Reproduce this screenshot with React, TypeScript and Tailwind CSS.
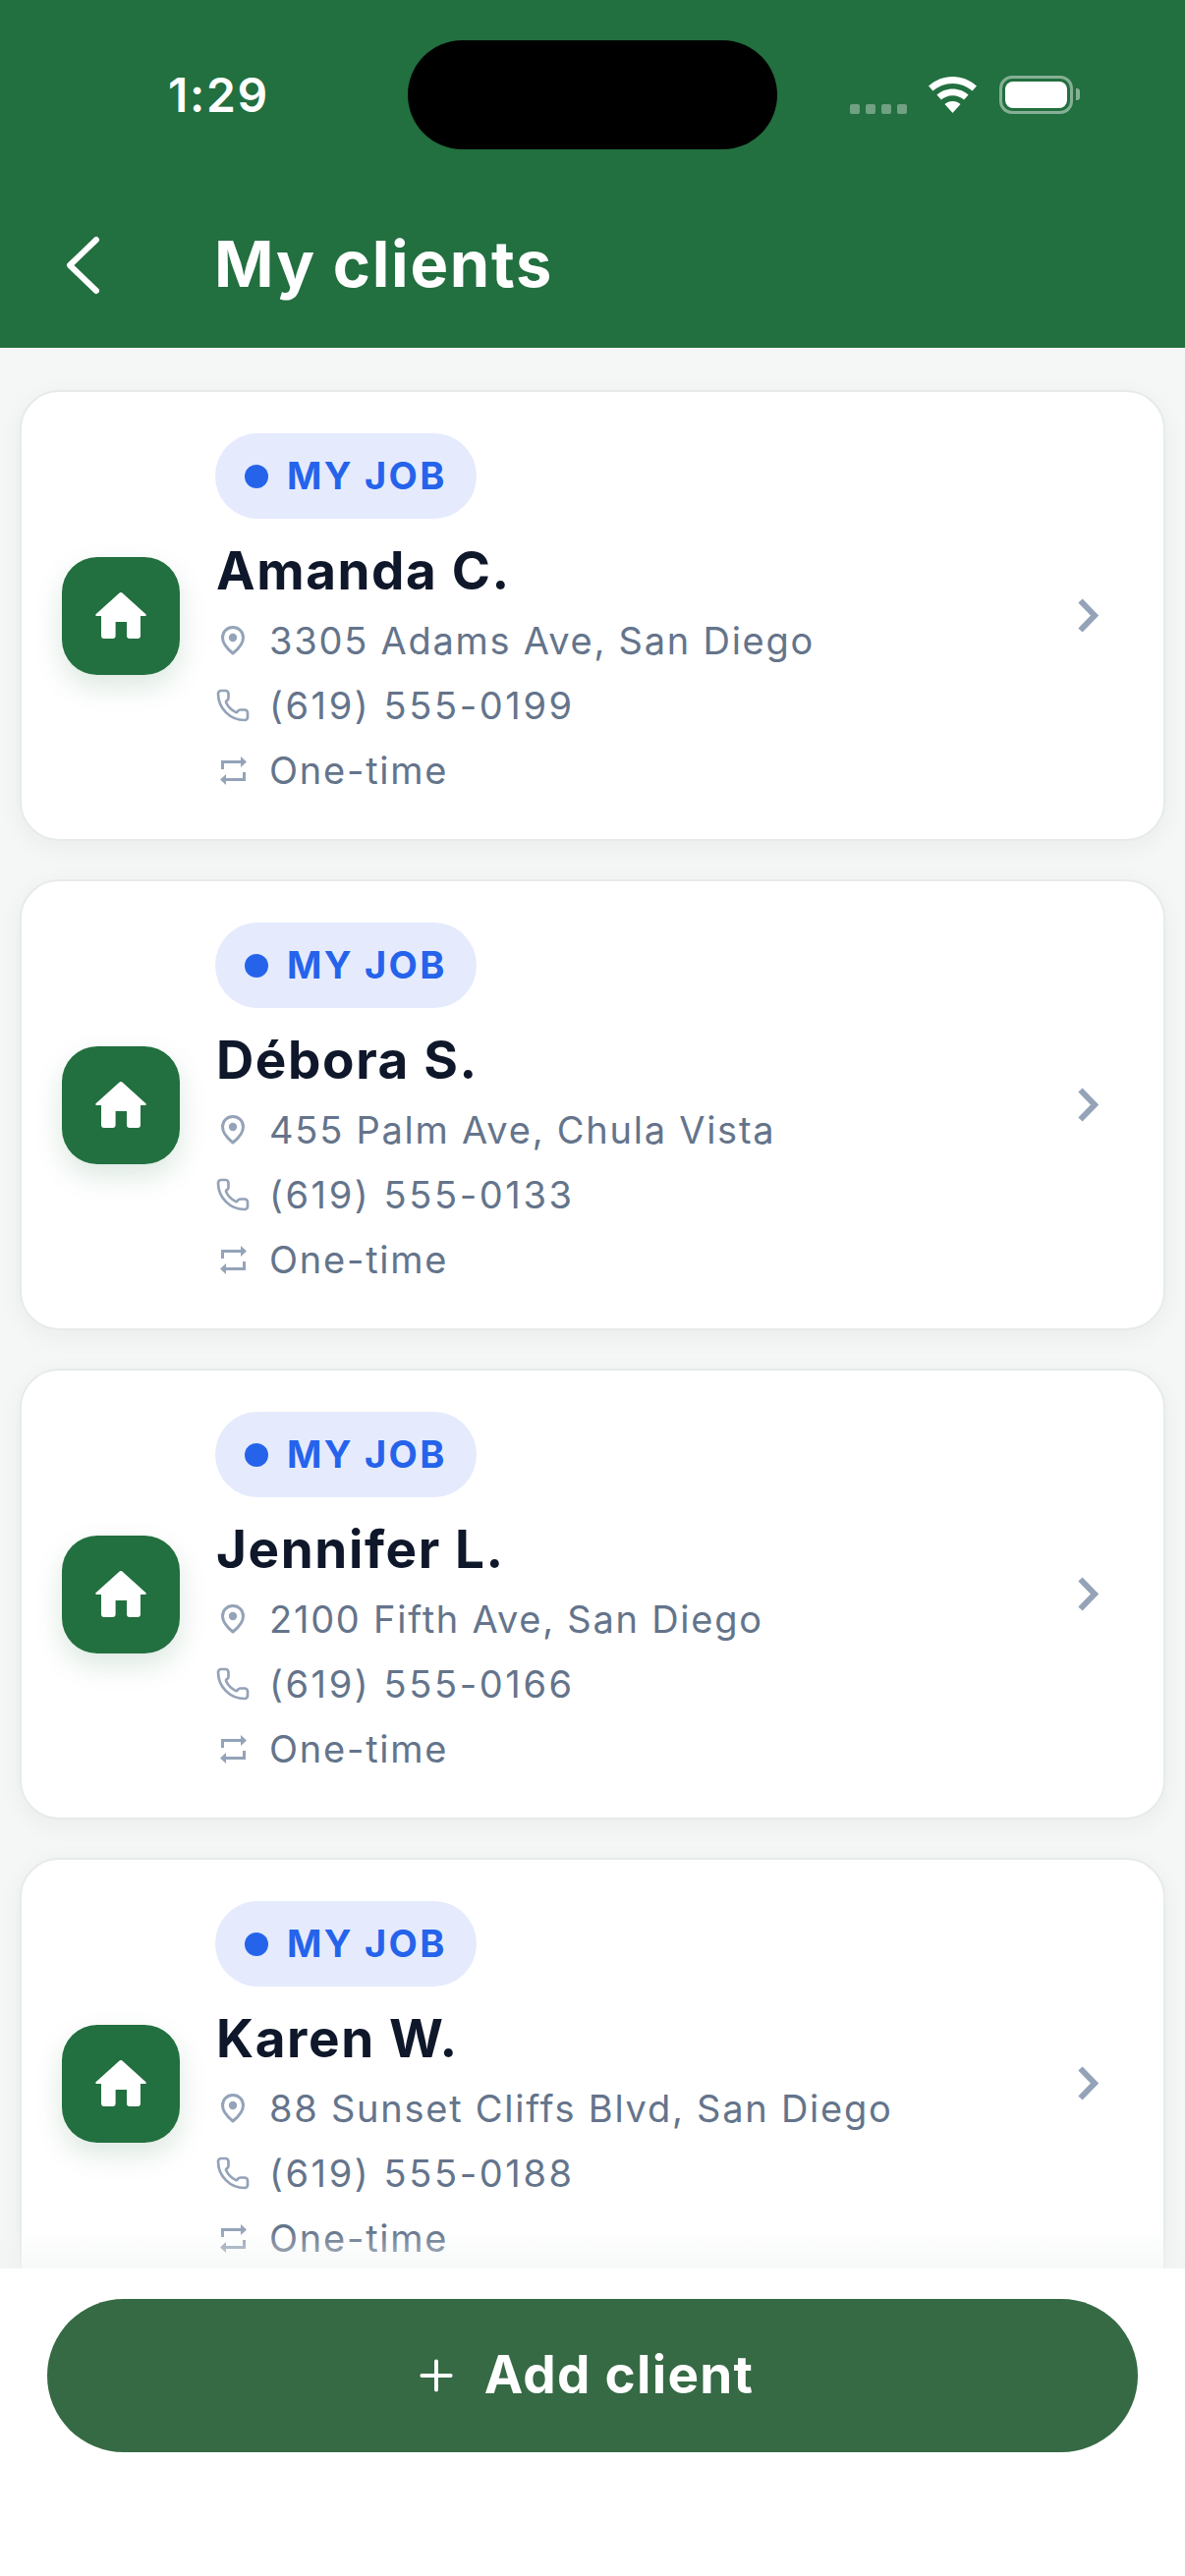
import { Phone, Plus } from "lucide-react";

const clients = [
  { name: "Amanda C.", address: "3305 Adams Ave, San Diego", phone: "(619) 555-0199" },
  { name: "Débora S.", address: "455 Palm Ave, Chula Vista", phone: "(619) 555-0133" },
  { name: "Jennifer L.", address: "2100 Fifth Ave, San Diego", phone: "(619) 555-0166" },
  { name: "Karen W.", address: "88 Sunset Cliffs Blvd, San Diego", phone: "(619) 555-0188" },
];

function HouseIcon() {
  return (
    <svg width="52" height="47" viewBox="0 0 52 47" fill="#fff">
      <path d="M24.6.6a2.1 2.1 0 0 1 2.8 0L51.5 22.3c.7.7.3 1.7-.7 1.7H46v20a3 3 0 0 1-3 3h-8a3 3 0 0 1-3-3V30H20.6v14a3 3 0 0 1-3 3H9a3 3 0 0 1-3-3V24H1.2c-1 0-1.4-1-.7-1.7L24.6.6z" />
    </svg>
  );
}

function PinIcon() {
  return (
    <svg width="24" height="30" viewBox="0 0 24 30" fill="none" stroke="currentColor" strokeWidth="3">
      <path d="M12 1.500C6 1.500 1.500 6 1.500 12 1.500 18 7 24 12 28 17 24 22.500 18 22.500 12 22.500 6 18 1.500 12 1.500z" strokeLinejoin="round" />
      <circle cx="12" cy="12" r="4.200" fill="currentColor" stroke="none" />
    </svg>
  );
}

function RepeatIcon() {
  return (
    <svg width="27" height="29" viewBox="0 0 27 29" fill="none" stroke="currentColor" strokeWidth="3">
      <path d="M2.500 13V5.500H21" />
      <path d="M21 0l6 5.500-6 5.500z" fill="currentColor" stroke="none" />
      <path d="M24.500 16v7.500H6" />
      <path d="M6 18l-6 5.500 6 5.500z" fill="currentColor" stroke="none" />
    </svg>
  );
}

function MetaRow({ icon, text, wide }: { icon: React.ReactNode; text: string; wide?: boolean }) {
  return (
    <div className="flex h-[66px] items-center gap-[19px] text-[38px] text-[#64748b]">
      <span className="flex h-[36px] w-[36px] shrink-0 items-center justify-center text-[#94a3b8]">{icon}</span>
      <span className={wide ? "whitespace-nowrap tracking-[2.6px]" : "whitespace-nowrap tracking-[1.75px]"}>{text}</span>
    </div>
  );
}

function ClientCard({ name, address, phone }: { name: string; address: string; phone: string }) {
  return (
    <div className="flex h-[459px] shrink-0 items-center rounded-[40px] border-2 border-[#e6ebe9] bg-white pl-[41px] pr-[66px] shadow-[0_6px_24px_rgba(15,40,30,0.05)]">
      <div className="flex h-[120px] w-[120px] shrink-0 items-center justify-center rounded-[36px] bg-[#226f3f] shadow-[0_12px_28px_rgba(35,111,64,0.16)]">
        <HouseIcon />
      </div>
      <div className="ml-[36px] min-w-0 flex-1 self-start pt-[42px]">
        <div className="flex h-[87px] w-[266px] items-center gap-[19px] rounded-full bg-[#e5ebfd] pl-[30px] text-[38px] font-[650] tracking-[2.3px] text-[#2563eb]">
          <span className="h-[24px] w-[24px] rounded-full bg-[#2563eb]" />
          <span>MY JOB</span>
        </div>
        <div className="mt-[20px] pl-[1px] text-[53px] font-[650] leading-[66px] tracking-[1.6px] text-[#0f172a]">{name}</div>
        <div className="mt-[5px]">
          <MetaRow icon={<PinIcon />} text={address} />
          <MetaRow icon={<Phone size={36} strokeWidth={1.8} />} text={phone} wide />
          <MetaRow icon={<RepeatIcon />} text="One-time" />
        </div>
      </div>
      <svg className="ml-auto shrink-0 text-[#94a3b8]" width="21" height="35" viewBox="0 0 21 35" fill="none" stroke="currentColor" strokeWidth="6">
        <path d="M2.500 2.500L17 17.500 2.500 32.500" />
      </svg>
    </div>
  );
}

export default function App() {
  return (
    <div className="flex h-[2622px] w-[1206px] flex-col overflow-hidden bg-[#f5f7f6] font-['Inter',sans-serif] [font-optical-sizing:none]">
      <header className="h-[354px] shrink-0 bg-[#226f3f] pt-[41px] text-white">
        <div className="flex h-[111px] items-start">
          <div className="w-[415px] pl-[171px] pt-[28px] text-[48px] font-semibold leading-[56px] tracking-[1.7px]">1:29</div>
          <div className="h-[111px] w-[376px] rounded-[56px] bg-black" />
          <div className="flex items-start pl-[74px] pt-[37px]">
            <div className="mt-[28px] flex gap-[6px]">
              <span className="h-[10px] w-[10px] rounded-[2px] bg-white/35" />
              <span className="h-[10px] w-[10px] rounded-[2px] bg-white/35" />
              <span className="h-[10px] w-[10px] rounded-[2px] bg-white/35" />
              <span className="h-[10px] w-[10px] rounded-[2px] bg-white/35" />
            </div>
            <svg className="ml-[22px]" width="49" height="37" viewBox="0 0 49 37" fill="#fff">
              <path d="M24.5 0C15 0 6.6 3.6 0 9.6l4.4 5C9.8 9.9 16.8 7 24.5 7s14.7 2.9 20.1 7.6l4.4-5C42.400 3.6 34 0 24.5 0z" />
              <path d="M24.5 12.5c-6.2 0-11.8 2.3-16.1 6.1l4.5 5c3.1-2.7 7.2-4.3 11.6-4.3s8.5 1.6 11.6 4.3l4.5-5c-4.300-3.800-9.900-6.100-16.100-6.100z" />
              <path d="M24.5 25c-3 0-5.800 1.100-8 3l8 9 8-9c-2.200-1.900-5-3-8-3z" />
            </svg>
            <div className="ml-[23px] mt-[-1px] flex h-[39px] w-[75px] shrink-0 items-center justify-center rounded-[13px] border-[3px] border-white/45">
              <div className="h-[27px] w-[63px] shrink-0 rounded-[8px] bg-white" />
            </div>
            <div className="ml-[3px] mt-[12px] h-[12px] w-[4px] shrink-0 rounded-r-[3px] bg-white/45" />
          </div>
        </div>
        <div className="mt-[90px] flex h-[56px] items-center pl-[66px]">
          <svg className="shrink-0" width="36" height="60" viewBox="0 0 36 60" fill="none" stroke="currentColor" strokeWidth="6" strokeLinecap="round" strokeLinejoin="round">
            <path d="M32 4L5 30l27 26" />
          </svg>
          <h1 className="mb-[3px] ml-[116px] text-[65px] font-[650] leading-none tracking-[1.7px]">My clients</h1>
        </div>
      </header>

      <main className="relative min-h-0 flex-1 overflow-hidden">
        <div className="flex flex-col gap-[39px] px-[20px] pt-[43px]">
          {clients.map((c) => (
            <ClientCard key={c.name} {...c} />
          ))}
        </div>
        <div className="absolute inset-x-0 bottom-0 h-[40px] bg-gradient-to-b from-[#f1f4f3]/0 to-[#f1f4f3]/60" />
      </main>

      <footer className="h-[313px] shrink-0 bg-white px-[48px] pt-[31px]">
        <button className="flex h-[156px] w-full items-center justify-center gap-[24px] rounded-full bg-[#356a44] pr-[20px] text-[53px] font-[650] tracking-[1.3px] text-white">
          <Plus size={50} strokeWidth={1.9} />
          <span>Add client</span>
        </button>
      </footer>
    </div>
  );
}
